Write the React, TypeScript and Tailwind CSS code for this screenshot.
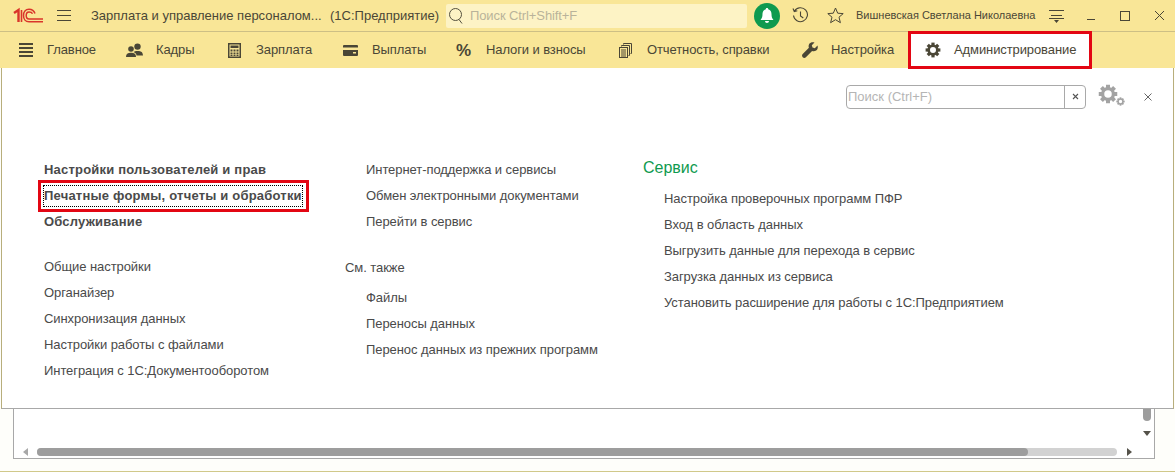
import React from "react";

const ink = "#4a4636";

function Hamb() {
  return (
    <svg width="16" height="14" viewBox="0 0 16 14" fill="none" stroke={ink} strokeWidth="1">
      <path d="M1 1.5h14M1 6.5h14M1 11.5h14" />
    </svg>
  );
}
function Logo() {
  return (
    <svg width="31" height="18" viewBox="0 0 31 18" fill="none" stroke="#d9352b">
      <path d="M1 6 L5.5 3 V15" strokeWidth="2.4" />
      <path d="M8.5 3 V15" strokeWidth="1.6" />
      <path d="M22 6.5 C21 3.5 18.5 2.2 16 2.2 C12.5 2.2 10.5 5 10.5 8.5 C10.5 12 12.5 14.8 16 14.8 H30" strokeWidth="1.5" />
      <path d="M19.5 6.8 C19 5.5 17.5 5 16 5 C14 5 13.2 6.8 13.2 8.5 C13.2 10.2 14 12 16 12 H30" strokeWidth="1.5" />
    </svg>
  );
}
function GearIcon({ size = 16, color = ink }: { size?: number; color?: string }) {
  const teeth = [0, 45, 90, 135, 180, 225, 270, 315];
  return (
    <svg width={size} height={size} viewBox="0 0 16 16">
      {teeth.map((a) => (
        <rect key={a} x="6.4" y="0.6" width="3.2" height="3.4" fill={color} transform={`rotate(${a} 8 8)`} />
      ))}
      <circle cx="8" cy="8" r="4.3" fill="none" stroke={color} strokeWidth="2.6" />
    </svg>
  );
}
const icons: Record<string, React.ReactNode> = {
  menu: (
    <svg width="16" height="14" viewBox="0 0 16 14" fill={ink}>
      <path d="M1 0h14v2H1zM1 4h14v2H1zM1 8h14v2H1zM1 12h14v2H1z" />
    </svg>
  ),
  people: (
    <svg width="17" height="15" viewBox="0 0 17 15" fill={ink}>
      <circle cx="11.5" cy="3.6" r="3.2" />
      <path d="M7.5 9c1-1.5 7-1.5 8.200 0 .8 1 1.300 2.500 1.300 3.500H10.500c0-1.500-1-2.700-3-3.500z" />
      <circle cx="5" cy="6" r="2.800" />
      <path d="M0 14c0-3 1.500-4.300 5-4.300S10 11 10 14z" />
    </svg>
  ),
  calc: (
    <svg width="13" height="15" viewBox="0 0 13 15">
      <rect x="0.750" y="0.750" width="11.500" height="13.500" fill="none" stroke={ink} strokeWidth="1.500" />
      <path d="M2.500 2.500h8v2.500h-8z" fill={ink} />
      <path d="M2.500 6.500h2v2h-2zM5.500 6.500h2v2h-2zM8.500 6.500h2v2h-2zM2.500 9.500h2v2h-2zM5.500 9.500h2v2h-2zM8.500 9.500h2v2h-2zM2.500 12h2v1h-2zM5.500 12h2v1h-2zM8.500 12h2v1h-2z" fill={ink} />
    </svg>
  ),
  wallet: (
    <svg width="15" height="11" viewBox="0 0 15 11" fill={ink}>
      <path d="M0 1a1 1 0 0 1 1-1h13a1 1 0 0 1 1 1v1.500H0zM0 5h15v5a1 1 0 0 1-1 1H1a1 1 0 0 1-1-1zM10 7v1.500h3V7z" fillRule="evenodd" />
    </svg>
  ),
  pct: <span className="text-[17px] font-bold leading-none text-[#4a4636]">%</span>,
  docs: (
    <svg width="13" height="15" viewBox="0 0 13 15" fill="none" stroke={ink} strokeWidth="1">
      <path d="M4.500 1.500V.5h8v10h-1M2.500 3.500v-1h8v10h-1" />
      <rect x="0.500" y="4.500" width="8" height="10" />
      <path d="M2 7h5M2 9h5M2 11h5M2 13h5" />
    </svg>
  ),
  wrench: (
    <svg width="16" height="16" viewBox="0 0 16 16" fill={ink}>
      <path d="M15.500 3.500 12.800 6.200 10.500 5.500 9.800 3.200 12.500.5C10.500-.2 8.300.3 7.300 1.800 6.500 3 6.400 4.500 6.900 5.800L.7 12c-.9.900-.9 2.300 0 3.200.9.900 2.300.9 3.200 0l6.200-6.200c1.300.5 2.800.4 4-.4 1.500-1 2.100-3.100 1.400-5.100z" />
    </svg>
  ),
  gear: <GearIcon />,
};

const nav: [string, string, string][] = [
  ["menu", "Главное", "w-[107px] pl-[18px] gap-[13px]"],
  ["people", "Кадры", "w-[101px] pl-[19px] gap-[13px]"],
  ["calc", "Зарплата", "w-[115px] pl-[20px] gap-[15px]"],
  ["wallet", "Выплаты", "w-[116px] pl-[20px] gap-[14px]"],
  ["pct", "Налоги и взносы", "w-[168px] pl-[17px] gap-[15px]"],
  ["docs", "Отчетность, справки", "w-[182px] pl-[12px] gap-[15px]"],
  ["wrench", "Настройка", "w-[119px] pl-[13px] gap-[13px]"],
];

function Item({ bold, children }: { bold?: boolean; children: React.ReactNode }) {
  return (
    <div className={`h-[26px] leading-[26px] whitespace-nowrap ${bold ? "font-bold tracking-[0.2px]" : "tracking-[-0.07px]"}`}>
      {children}
    </div>
  );
}

export default function App() {
  return (
    <div className="relative w-[1175px] h-[472px] overflow-hidden bg-[#fefefa] text-[#4a4a4a] text-[13px] font-['Liberation_Sans',Arial,sans-serif]">
      <div className="flex items-center h-[32px] bg-[#f9e697] border-b border-[#cdbf85] text-[#4a4636]">
        <div className="ml-[13px] w-[31px]"><Logo /></div>
        <div className="ml-[12px]"><Hamb /></div>
        <div className="ml-[19px] w-[239px] whitespace-nowrap">Зарплата и управление персоналом...</div>
        <div className="w-[116px] whitespace-nowrap">(1С:Предприятие)</div>
        <div className="w-[301px] h-[24px] bg-[#fdf3c5] rounded-[2px] flex items-center pl-[2px] text-[13px] tracking-[-0.1px] text-[#b9b39a]">
          <svg width="15" height="18" viewBox="0 0 15 18" fill="none" stroke="#55513f" strokeWidth="1">
            <circle cx="7.500" cy="7.500" r="6" />
            <path d="m11 12.500 3 4" />
          </svg>
          <span className="ml-[7px]">Поиск Ctrl+Shift+F</span>
        </div>
        <div className="ml-[7px] w-[26px] h-[26px] shrink-0 rounded-full bg-[#0f9a4f] flex items-center justify-center">
          <svg width="14" height="16" viewBox="0 0 14 16" fill="#fff">
            <path d="M7 0c.8 0 1.200.5 1.200 1.200C10.500 1.800 11.500 3.800 11.500 6c0 3 .6 4.500 2 6H.5c1.400-1.500 2-3 2-6 0-2.200 1-4.200 3.300-4.800C5.800.5 6.200 0 7 0zM5 13h4c0 1.200-.9 2-2 2s-2-.8-2-2z" />
          </svg>
        </div>
        <div className="ml-[12px] shrink-0">
          <svg width="17" height="17" viewBox="0 0 17 17" fill="none" stroke={ink} strokeWidth="1.100">
            <path d="M2.500 4A7 7 0 1 1 1.500 8.500M1 1.500l1.300 3 3-.8M8.500 4.500v4.500l2.800 2" />
          </svg>
        </div>
        <div className="ml-[18px] shrink-0">
          <svg width="17" height="17" viewBox="0 0 17 17" fill="none" stroke={ink} strokeWidth="1">
            <path d="m8.500 1 2.200 5.200 5.500.4-4.200 3.600 1.400 5.500-4.900-3-4.900 3 1.400-5.500L.8 6.600l5.500-.4z" />
          </svg>
        </div>
        <div className="ml-[12px] w-[179px] shrink-0 whitespace-nowrap text-[11px]">Вишневская Светлана Николаевна</div>
        <div className="ml-[14px] shrink-0">
          <svg width="16" height="16" viewBox="0 0 16 16" fill={ink}>
            <path d="M0 2h15v1H0zM2 7h11v1H2zM0 10h15v1H0zM5 12h5l-2.500 3z" />
          </svg>
        </div>
        <div className="ml-[22px] w-[8px] h-[1px] mt-[8px] shrink-0 bg-[#4a4636]" />
        <div className="ml-[25px] w-[10px] h-[10px] shrink-0 border border-[#4a4636]" />
        <div className="ml-[24px] shrink-0">
          <svg width="11" height="11" viewBox="0 0 11 11" stroke={ink} strokeWidth="1"><path d="m1 1 9 9M10 1l-9 9" /></svg>
        </div>
      </div>

      <div className="flex items-center h-[36px] bg-[#f9e697] text-[#4a4636] tracking-[-0.1px]">
        {nav.map(([ic, label, cls]) => (
          <div key={label} className={`flex items-center h-full whitespace-nowrap shrink-0 ${cls}`}>
            <span className="flex items-center justify-center shrink-0">{icons[ic]}</span>
            <span>{label}</span>
          </div>
        ))}
        <div className="relative z-10 flex items-center h-[38px] w-[184px] pl-[14px] gap-[13px] bg-white border-[3px] border-[#e30613] whitespace-nowrap shrink-0">
          {icons.gear}
          <span>Администрирование</span>
        </div>
      </div>

      <div className="mx-[1px] h-[341px] bg-white border border-t-0 border-[#b8ae7c] border-b-[#a8a8a8] pl-[42px] pr-[21px] pt-[13px]">
        <div className="flex justify-end items-center h-[31px]">
          <div className="flex items-stretch w-[240px] h-[24px] border border-[#a9a9a9] rounded-[4px] bg-white">
            <div className="flex-1 pl-[1px] leading-[22px] text-[#b5b5b5] text-[13px]">Поиск (Ctrl+F)</div>
            <div className="w-[21px] border-l border-[#a9a9a9] flex items-center justify-center">
              <svg width="7" height="7" viewBox="0 0 7 7" stroke="#555" strokeWidth="1.100"><path d="m1 1 5 5M6 1 1 6" /></svg>
            </div>
          </div>
          <div className="ml-[12px] relative w-[28px] h-[26px]">
            <GearIcon size={20} color="#a3a3a3" />
            <span className="absolute left-[18px] top-[13px]"><GearIcon size={9} color="#a3a3a3" /></span>
          </div>
          <div className="ml-[18px]">
            <svg width="8" height="8" viewBox="0 0 8 8" stroke="#666" strokeWidth="1"><path d="m.5.500 7 7M7.500.500l-7 7" /></svg>
          </div>
        </div>

        <div className="flex mt-[45px]">
          <div className="w-[301px] shrink-0">
            <Item bold>Настройки пользователей и прав</Item>
            <div className="relative"><Item bold>Печатные формы, отчеты и обработки</Item>
              <div className="absolute left-[-6px] top-[-3px] w-[271px] h-[32px] border-[3px] border-[#e30613] pt-[2px] pb-[2px] pl-[2px] pr-[3px]">
                <div className="w-full h-full border border-dotted border-black" />
              </div>
            </div>
            <Item bold>Обслуживание</Item>
            <div className="h-[19px]" />
            <Item>Общие настройки</Item>
            <Item>Органайзер</Item>
            <Item>Синхронизация данных</Item>
            <Item>Настройки работы с файлами</Item>
            <Item>Интеграция с 1С:Документооборотом</Item>
          </div>
          <div className="w-[298px] shrink-0">
            <div className="pl-[21px]">
              <Item>Интернет-поддержка и сервисы</Item>
              <Item>Обмен электронными документами</Item>
              <Item>Перейти в сервис</Item>
            </div>
            <div className="h-[20px]" />
            <Item>См. также</Item>
            <div className="h-[4px]" />
            <div className="pl-[21px]">
              <Item>Файлы</Item>
              <Item>Переносы данных</Item>
              <Item>Перенос данных из прежних программ</Item>
            </div>
          </div>
          <div>
            <div className="h-[22px] leading-[22px] text-[16px] text-[#0f9a4f]">Сервис</div>
            <div className="h-[7px]" />
            <div className="pl-[21px]">
              <Item>Настройка проверочных программ ПФР</Item>
              <Item>Вход в область данных</Item>
              <Item>Выгрузить данные для перехода в сервис</Item>
              <Item>Загрузка данных из сервиса</Item>
              <Item>Установить расширение для работы с 1С:Предприятием</Item>
            </div>
          </div>
        </div>
      </div>

      <div className="h-[63px] relative pl-[13px] border-b border-[#d0c88a]">
        <div className="w-[1142px] h-[50px] bg-white border border-t-0 border-[#a8a8a8] flex items-end pb-[2px] pl-[9px]">
          <div className="flex items-center h-[9px]">
            <span className="w-0 h-0 border-y-[4px] border-y-transparent border-r-[5px] border-r-[#a8a8a8]" />
            <div className="ml-[9px] w-[1080px] h-[8px] bg-[#d2d2d2] rounded-full">
              <div className="w-[991px] h-full bg-[#9d9d9d] rounded-full" />
            </div>
            <span className="ml-[10px] w-0 h-0 border-y-[4px] border-y-transparent border-l-[5px] border-l-[#55524a]" />
          </div>
        </div>
        <div className="absolute left-[1143px] top-0 w-[8px] h-[12px] bg-[#9d9d9d] rounded-b-full" />
        <div className="absolute left-[1143px] top-[22px] w-0 h-0 border-x-[4px] border-x-transparent border-t-[5px] border-t-[#55524a]" />
      </div>
    </div>
  );
}
